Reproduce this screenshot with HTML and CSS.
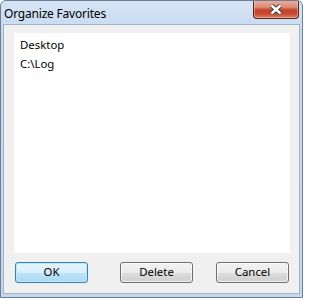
FILE: index.html
```html
<!DOCTYPE html>
<html>
<head>
<meta charset="utf-8">
<link rel="stylesheet" href="styles.css">
</head>
<body>
<div class="window">
  <div class="titlebar">
    <span class="title">Organize Favorites</span>
    <div class="close">
      <svg width="14" height="11" viewBox="0 0 14 11">
        <path d="M2.5 1.5 L11.5 9.5 M11.5 1.5 L2.5 9.5" stroke="#3d3d3d" stroke-width="4.4" fill="none"/>
        <path d="M2.5 1.5 L11.5 9.5 M11.5 1.5 L2.5 9.5" stroke="#ffffff" stroke-width="2.4" fill="none"/>
      </svg>
    </div>
  </div>
  <div class="client">
    <div class="listbox">
      <div class="item">Desktop</div>
      <div class="item">C:\Log</div>
    </div>
    <div class="buttons">
      <div class="btn default">OK</div>
      <div class="btn delete">Delete</div>
      <div class="btn cancel">Cancel</div>
    </div>
  </div>
</div>
</body>
</html>
```
FILE: styles.css
```css
html, body {
  margin: 0;
  padding: 0;
  background: #ffffff;
}
body {
  font-family: "Noto Sans", "Open Sans", sans-serif;
  font-size: 11.4px;
  color: #000;
}
.window {
  box-sizing: border-box;
  width: 303px;
  height: 298px;
  border: 1px solid #6c7f96;
  border-radius: 6px 6px 0 0;
  background: linear-gradient(#d6e4f5, #c8daf0 30px, #c4d7ee);
  display: flex;
  flex-direction: column;
  overflow: hidden;
}
.titlebar {
  height: 23px;
  display: flex;
  align-items: flex-start;
  justify-content: space-between;
  padding-left: 3px;
  flex: none;
}
.title {
  font-size: 12px;
  line-height: 14px;
  margin-top: 6px;
  color: #000;
  letter-spacing: -0.2px;
}
.close {
  box-sizing: border-box;
  width: 46px;
  height: 19px;
  margin-top: -1px;
  margin-right: 3px;
  border: 1px solid #5b2219;
  border-top: none;
  border-radius: 0 0 4px 4px;
  background: linear-gradient(#eab0a1, #dc8b75 40%, #c1432b 55%, #c7482f 75%, #dc7b60);
  box-shadow: inset 0 0 0 1px rgba(255,255,255,0.35);
  display: flex;
  align-items: center;
  justify-content: center;
}
.close svg { display: block; }
.client {
  box-sizing: border-box;
  height: 270px;
  margin: 0 2px 0 2px;
  border: 1px solid #9fb3cb;
  background: #f0f0f0;
  display: flex;
  flex-direction: column;
  flex: none;
}
.listbox {
  box-sizing: border-box;
  width: 276px;
  height: 220px;
  margin: 8px 0 0 10px;
  background: #ffffff;
  padding: 2px 0 0 6px;
}
.item {
  line-height: 19px;
  height: 19px;
  white-space: nowrap;
}
.buttons {
  display: flex;
  margin-top: 9px;
  padding-left: 11px;
}
.btn {
  box-sizing: border-box;
  width: 73px;
  height: 21px;
  border: 1px solid #707070;
  border-radius: 3px;
  background: linear-gradient(#f2f2f2, #ebebeb 50%, #dddddd 51%, #cfcfcf);
  box-shadow: inset 0 0 0 1px rgba(255,255,255,0.7);
  display: flex;
  align-items: center;
  justify-content: center;
  line-height: 14px;
  padding-bottom: 1px;
}
.btn.default {
  border-color: #3c7fb1;
  background: linear-gradient(#e5f4fc, #d9eefb 50%, #bfe4f8 51%, #acd8f2);
  box-shadow: inset 0 0 0 1px #b9e9fc;
}
.btn.delete { margin-left: 32px; }
.btn.cancel { margin-left: 23px; }
```
